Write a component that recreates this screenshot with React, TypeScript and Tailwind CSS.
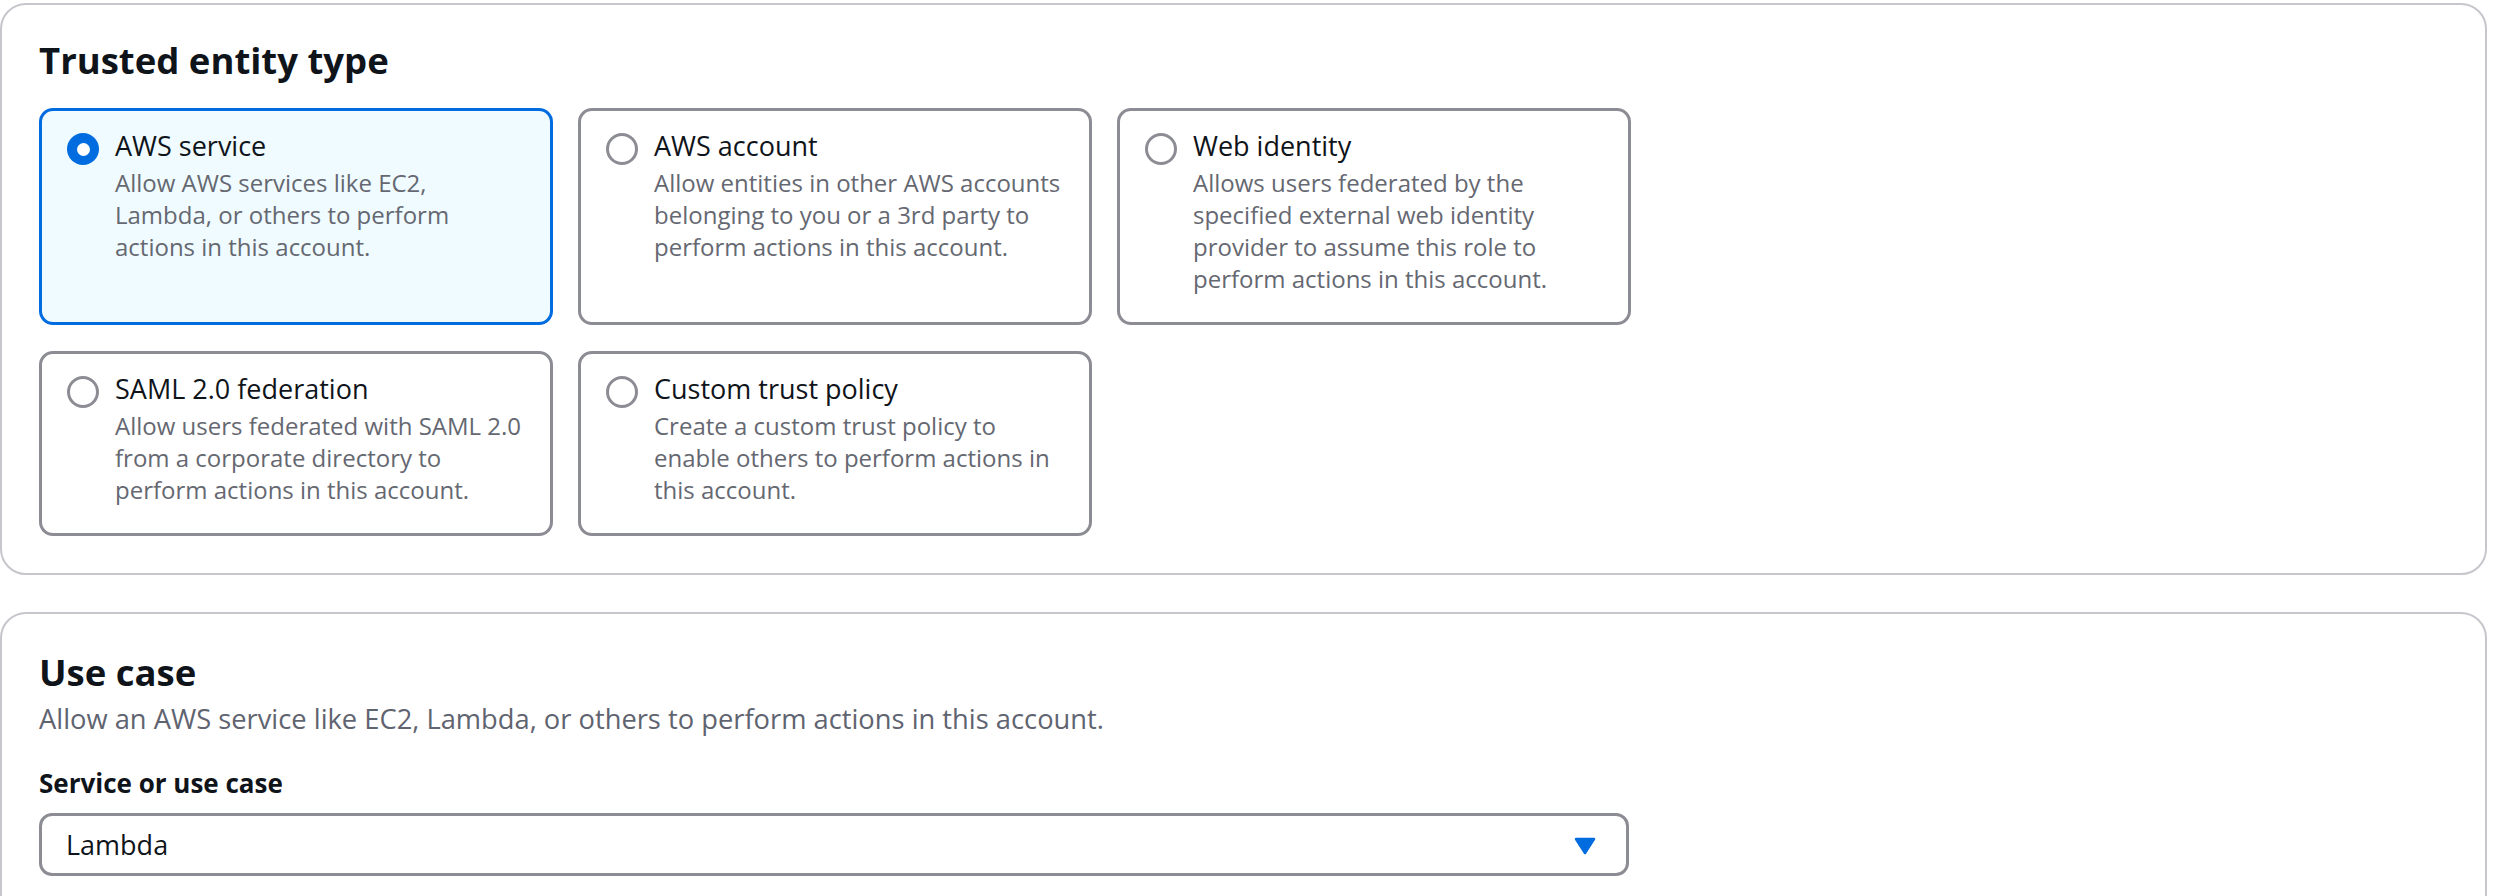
import React from "react";

type Tile = { title: string; lines: string[]; checked?: boolean };

const row1: Tile[] = [
  {
    title: "AWS service",
    lines: ["Allow AWS services like EC2,", "Lambda, or others to perform", "actions in this account."],
    checked: true,
  },
  {
    title: "AWS account",
    lines: ["Allow entities in other AWS accounts", "belonging to you or a 3rd party to", "perform actions in this account."],
  },
  {
    title: "Web identity",
    lines: [
      "Allows users federated by the",
      "specified external web identity",
      "provider to assume this role to",
      "perform actions in this account.",
    ],
  },
];

const row2: Tile[] = [
  {
    title: "SAML 2.0 federation",
    lines: ["Allow users federated with SAML 2.0", "from a corporate directory to", "perform actions in this account."],
  },
  {
    title: "Custom trust policy",
    lines: ["Create a custom trust policy to", "enable others to perform actions in", "this account."],
  },
];

function Radio({ checked }: { checked?: boolean }) {
  if (checked) {
    return (
      <div className="mt-[3px] flex h-[32px] w-[32px] shrink-0 items-center justify-center rounded-full bg-[#006ce0]">
        <div className="h-[13px] w-[13px] rounded-full bg-white" />
      </div>
    );
  }
  return <div className="mt-[3px] h-[32px] w-[32px] shrink-0 rounded-full border-[3px] border-[#8c8c94] bg-white" />;
}

function TileCard({ t }: { t: Tile }) {
  return (
    <div
      className={
        "flex gap-[16px] rounded-[14px] border-[3px] pl-[25px] pr-[10px] pt-[19px] pb-[27px] " +
        (t.checked ? "border-[#006ce0] bg-[#f0fbff]" : "border-[#8c8c94] bg-white")
      }
    >
      <Radio checked={t.checked} />
      <div className="flex flex-col">
        <div className="whitespace-nowrap text-[27px] leading-[32px] text-[#0f141a]">{t.title}</div>
        <div className="mt-[5px] text-[24px] leading-[32px] text-[#656871]">
          {t.lines.map((l) => (
            <div key={l} className="whitespace-nowrap">
              {l}
            </div>
          ))}
        </div>
      </div>
    </div>
  );
}

export default function App() {
  return (
    <div className="h-[896px] w-[2505px] overflow-hidden bg-white pt-[3px] font-['Open_Sans',sans-serif] text-[#0f141a]">
      <section className="w-[2487px] rounded-[26px] border-2 border-[#c6c6cd] bg-white px-[37px] pt-[33px] pb-[37px]">
        <h2 className="text-[36.5px] font-bold leading-[44px] text-[#0f141a]">Trusted entity type</h2>
        <div className="mt-[26px] grid w-[1592px] grid-cols-3 gap-x-[25px] gap-y-[26px]">
          {row1.map((t) => (
            <TileCard key={t.title} t={t} />
          ))}
          {row2.map((t) => (
            <TileCard key={t.title} t={t} />
          ))}
        </div>
      </section>

      <section className="mt-[37px] h-[400px] w-[2487px] rounded-[26px] border-2 border-[#c6c6cd] bg-white px-[37px] pt-[36px]">
        <h2 className="text-[36.5px] font-bold leading-[44px] text-[#0f141a]">Use case</h2>
        <p className="mt-[8px] text-[27.3px] leading-[34px] text-[#5f6470]">
          Allow an AWS service like EC2, Lambda, or others to perform actions in this account.
        </p>
        <div className="mt-[30px] text-[26px] font-bold leading-[34px] text-[#0f141a]">Service or use case</div>
        <div className="mt-[13px] flex h-[63px] w-[1590px] items-center justify-between rounded-[13px] border-[3px] border-[#8c8c94] bg-white pl-[24px] pr-[30px]">
          <span className="text-[27px] leading-[34px] text-[#0f141a]">Lambda</span>
          <svg width="22" height="18" viewBox="0 0 22 18" className="mt-[2px]">
            <polygon points="2,2 20,2 11,16" fill="#006ce0" stroke="#006ce0" strokeWidth="2.5" strokeLinejoin="round" />
          </svg>
        </div>
      </section>
    </div>
  );
}
